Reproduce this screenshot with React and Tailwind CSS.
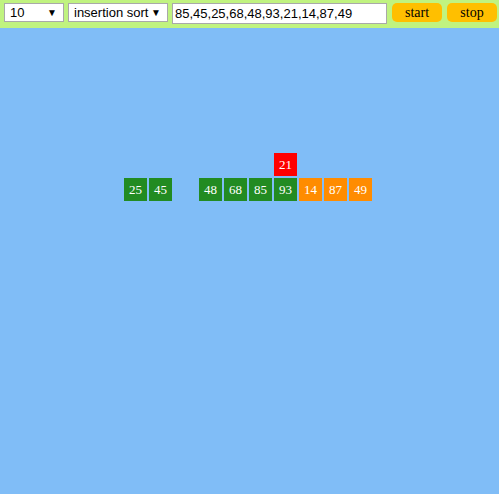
import React from 'react';

const BARS = [
  { top: null, value: 25, color: 'green' },
  { top: null, value: 45, color: 'green' },
  { top: null, value: null, color: null },
  { top: null, value: 48, color: 'green' },
  { top: null, value: 68, color: 'green' },
  { top: null, value: 85, color: 'green' },
  { top: 21, value: 93, color: 'green' },
  { top: null, value: 14, color: 'orange' },
  { top: null, value: 87, color: 'orange' },
  { top: null, value: 49, color: 'orange' },
];

const Box = ({ value, color }) => {
  if (value === null) return <div className="w-[23px] h-[23px]" />;
  const bg = color === 'green' ? 'bg-[#228b22]' : color === 'orange' ? 'bg-[#ff8c00]' : 'bg-[#ff0000]';
  return (
    <div
      className={`w-[23px] h-[23px] ${bg} text-white text-[13px] flex items-center justify-center`}
      style={{ fontFamily: '"Liberation Serif", "DejaVu Serif", serif' }}
    >
      {value}
    </div>
  );
};

const Select = ({ label, width }) => (
  <div className={`relative ${width} h-[19px] bg-white border border-[#a9a9a9] flex items-center pl-[5px] text-[13px] text-black`}>
    <span>{label}</span>
    <span className="absolute right-[6px] top-[4px] text-[10px] leading-none">▼</span>
  </div>
);

export default function App() {
  return (
    <div className="w-[499px] h-[494px] bg-[#80bdf7] flex flex-col" style={{ fontFamily: '"Liberation Sans", Arial, sans-serif' }}>
      {/* Controls */}
      <div className="h-[28px] bg-[#c0f380] flex items-start pt-[3px] pl-[4px]">
        <Select label="10" width="w-[60px]" />
        <div className="w-[4px]" />
        <Select label="insertion sort" width="w-[100px]" />
        <div className="w-[4px]" />
        <div className="w-[215px] h-[21px] bg-white border border-[#a9a9a9] flex items-center pl-[2px] text-[13px] text-black">
          85,45,25,68,48,93,21,14,87,49
        </div>
        <button
          className="ml-[5px] w-[50px] h-[19px] bg-[#ffbf00] rounded-[5px] text-[14px] text-black leading-none"
          style={{ fontFamily: '"Liberation Serif", serif' }}
        >
          start
        </button>
        <button
          className="ml-[5px] w-[50px] h-[19px] bg-[#ffbf00] rounded-[5px] text-[14px] text-black leading-none"
          style={{ fontFamily: '"Liberation Serif", serif' }}
        >
          stop
        </button>
      </div>

      {/* Bars */}
      <div className="flex items-end gap-[2px] pt-[125px] pl-[124px]">
        {BARS.map((b, i) => (
          <div key={i} className="flex flex-col gap-[2px]">
            {b.top !== null && <Box value={b.top} color="red" />}
            <Box value={b.value} color={b.color} />
          </div>
        ))}
      </div>
    </div>
  );
}
